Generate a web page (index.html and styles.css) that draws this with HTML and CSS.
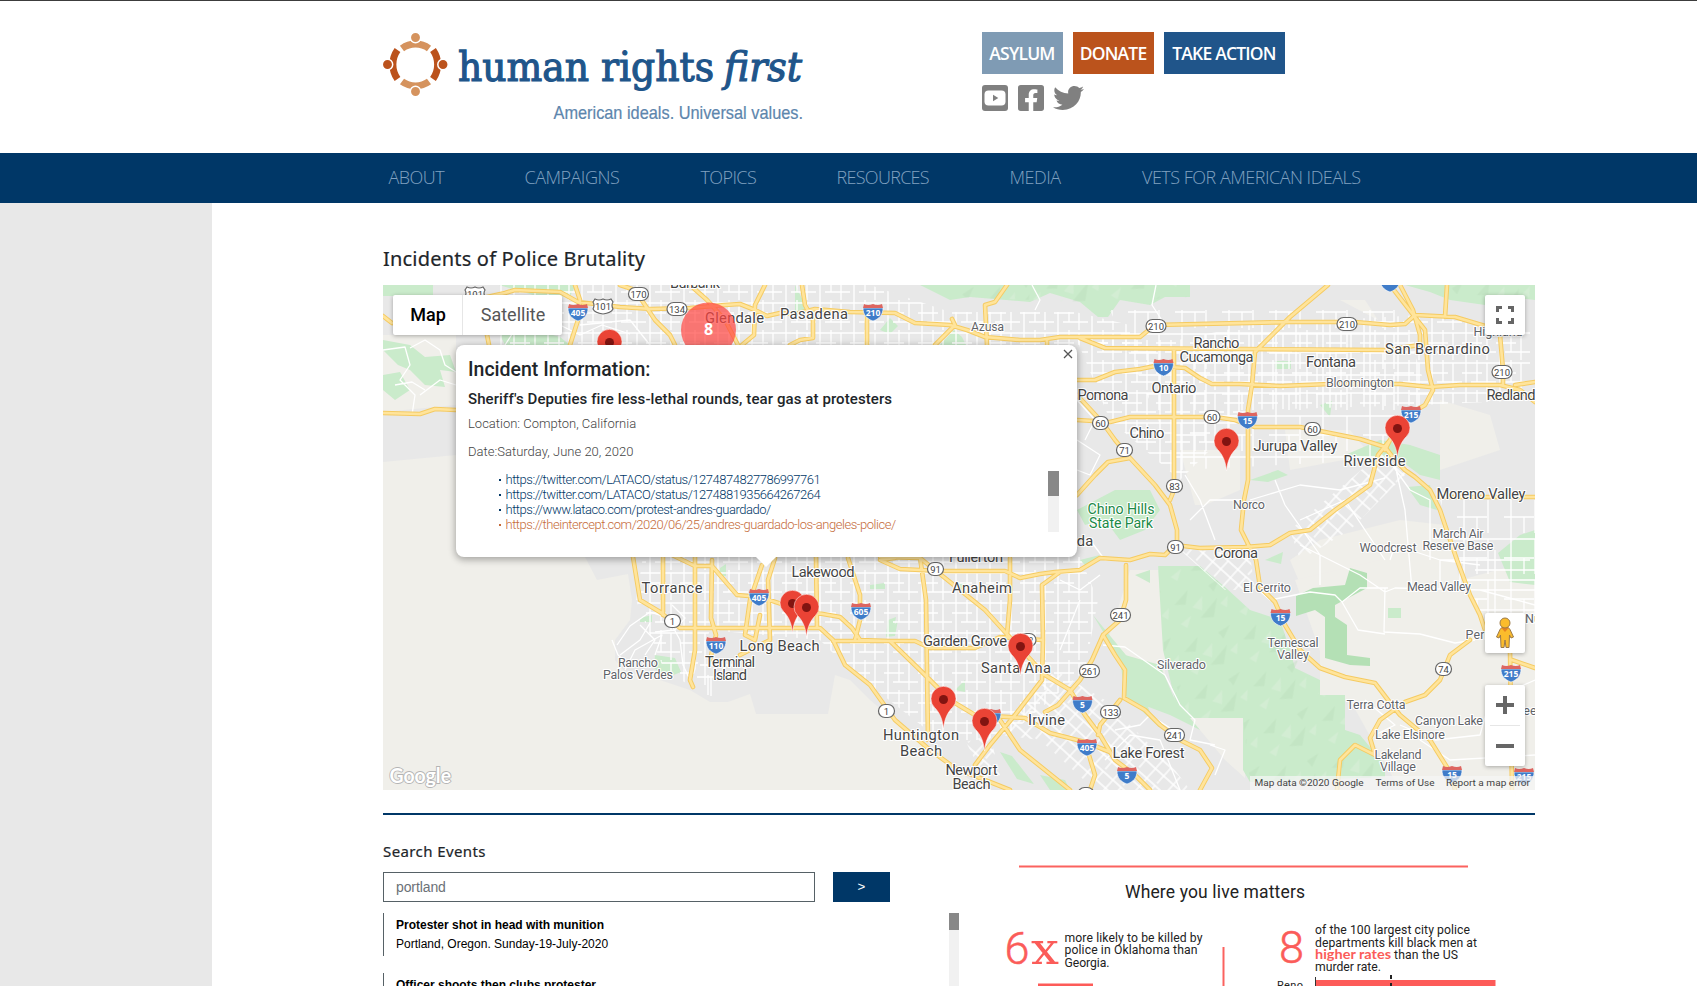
FILE: index.html
```html
<!DOCTYPE html>
<html lang="en">
<head>
<meta charset="utf-8">
<title>Human Rights First</title>
<link rel="stylesheet" href="styles.css">
</head>
<body>
<header class="header">
  <svg class="logo" width="430" height="100" viewBox="380 30 430 100" role="img" aria-label="human rights first">
    <g fill="none" stroke-width="7">
      <g stroke="#d5935e"><path d="M402 48.500A23 23 0 0 1 429 48.500"/><path d="M402 81.500A23 23 0 0 0 429 81.500"/></g>
      <g stroke="#bb521c"><path d="M397.500 50A25 25 0 0 0 397.500 79"/><path d="M433 50A25 25 0 0 1 433 79"/></g>
    </g>
    <g stroke="#fff" stroke-width="1.500">
      <circle cx="415.500" cy="37.500" r="5.200" fill="#d5935e"/><circle cx="415.500" cy="91.500" r="5.200" fill="#d5935e"/>
      <circle cx="387.500" cy="64.500" r="5.200" fill="#bb521c"/><circle cx="443" cy="64.500" r="5.200" fill="#bb521c"/>
    </g>
    <g class="wordmark">
      <text x="458" y="80.500" textLength="256" lengthAdjust="spacingAndGlyphs">human rights</text>
      <text x="724" y="80.500" textLength="78" lengthAdjust="spacingAndGlyphs" font-style="italic">first</text>
    </g>
    <text class="tagline" x="553.500" y="119" textLength="249.500" lengthAdjust="spacingAndGlyphs">American ideals. Universal values.</text>
  </svg>
  <div class="actions">
    <div class="buttons"><a class="btn asylum">ASYLUM</a><a class="btn donate">DONATE</a><a class="btn take">TAKE ACTION</a></div>
    <div class="social">
      <svg width="26" height="26" viewBox="0 0 26 26"><rect width="26" height="26" rx="3" fill="#808080"/><rect x="2.500" y="5.500" width="21" height="15" rx="4" fill="#fff"/><path d="M11 9.800v6.400l5.300-3.200z" fill="#808080"/></svg>
      <svg width="26" height="26" viewBox="0 0 448 448"><path fill="#808080" d="M400 0H48A48 48 0 0 0 0 48v352a48 48 0 0 0 48 48h137V296h-63v-72h63v-55c0-62 37-96 94-96 27 0 55 5 55 5v61h-31c-31 0-40 19-40 38v47h69l-11 72h-58v152h137a48 48 0 0 0 48-48V48a48 48 0 0 0-48-48z"/></svg>
      <svg width="31" height="26" viewBox="0 30 512 452" preserveAspectRatio="none"><path fill="#808080" d="M459.400 151.700c.3 4.500.3 9.100.3 13.600 0 138.700-105.600 298.600-298.600 298.600-59.500 0-114.700-17.200-161.100-47.100 8.400 1 16.600 1.300 25.300 1.300 49.100 0 94.200-16.600 130.300-44.800-46.100-1-84.800-31.200-98.100-72.800 6.500 1 13 1.600 19.800 1.600 9.400 0 18.800-1.300 27.600-3.600-48.100-9.700-84.100-52-84.100-103v-1.300c14 7.800 30.200 12.700 47.400 13.300-28.300-18.800-46.800-51-46.800-87.400 0-19.500 5.200-37.400 14.300-53 51.700 63.700 129.300 105.300 216.400 109.800-1.600-7.800-2.600-15.900-2.600-24 0-57.800 46.800-104.900 104.900-104.900 30.200 0 57.500 12.700 76.700 33.100 23.700-4.500 46.500-13.300 66.600-25.300-7.800 24.400-24.400 44.800-46.100 57.800 21.100-2.300 41.600-8.100 60.400-16.200-14.300 20.800-32.200 39.300-52.600 54.300z"/></svg>
    </div>
  </div>
</header>
<nav class="nav">
  <a class="n1">ABOUT</a><a class="n2">CAMPAIGNS</a><a class="n3">TOPICS</a><a class="n4">RESOURCES</a><a class="n5">MEDIA</a><a class="n6">VETS FOR AMERICAN IDEALS</a>
</nav>
<div class="page">
<aside class="gutter"></aside>
<main class="content">
  <h1 class="title">Incidents of Police Brutality</h1>
  <section class="map">
    <svg class="tiles" width="1152" height="505" viewBox="383 285 1152 505">
      <defs>
        <pattern id="grid" width="34" height="30" patternUnits="userSpaceOnUse"><path d="M0 3H34M0 13H20M9 22H34M4 0V30M15 0V22M25 3V30" stroke="#fff" stroke-width="1.300" fill="none"/></pattern>
        <pattern id="wide" width="47" height="41" patternUnits="userSpaceOnUse"><path d="M0 6H47M0 25H30M7 0V41M31 6V41M20 25V41" stroke="#fff" stroke-width="1.300" fill="none"/></pattern>
        <pattern id="diag" width="24" height="24" patternUnits="userSpaceOnUse" patternTransform="rotate(42)"><path d="M0 3H24M0 14H24M5 0V24M16 3V24" stroke="#fff" stroke-width="1.300" fill="none"/></pattern>
        <pattern id="relief" width="60" height="48" patternUnits="userSpaceOnUse" patternTransform="rotate(-12)"><path d="M3 20l16-12-5 14zM26 38l20-16-7 18zM40 8l13-5-9 12z" fill="#b6d8b8" opacity=".35"/><path d="M20 26l12-9-3 14zM48 28l9-6-3 11zM5 40l12-6-6 11z" fill="#d9eed8" opacity=".6"/></pattern>
        <g id="pin"><path d="M0 29.500C-1 18-5 12-9 8A12.500 12.500 0 1 1 9 8C5 12 1 18 0 29.500z" fill="#ea4335" stroke="#fff" stroke-width=".5"/><circle r="4.500" fill="#811411"/></g>
        <g id="us"><path d="M-10-4H10C10 3 6 7 0 9-6 7-10 3-10-4z" fill="#3f7cc9" stroke="#fff" stroke-width=".6"/><path d="M-9-8Q-5-6 0-8Q5-6 9-8L10-4H-10z" fill="#dd6560"/></g>
        <g id="sr"><rect x="-8" y="-6.500" width="16" height="13" rx="6.500" fill="#fff" stroke="#666" stroke-width="1.200"/></g>
        <g id="sr3"><rect x="-10" y="-6.500" width="20" height="13" rx="6.500" fill="#fff" stroke="#666" stroke-width="1.200"/></g>
        <g id="old"><path d="M-8-7Q-4-5 0-7 4-5 8-7L10-4Q8-1 10 3 8 7 0 8-8 7-10 3-8-1-10-4z" fill="#fff" stroke="#666" stroke-width="1.200"/></g>
      </defs>
      <rect x="383" y="285" width="1152" height="505" fill="#e8e8e8"/>
      <g fill="#f0efea">
        <path d="M383 335L456 335V405L383 412zM1340 300H1365L1378 320L1340 300zM1180 450H1240V490L1205 505H1195zM1285 430L1350 430 1370 455 1290 470zM1400 520L1445 525 1460 580 1535 560V790H1400L1350 700 1290 560 1320 540zM1130 570H1165V690H1130L1108 640zM1440 400L1490 415 1500 450 1440 470zM1190 718L1245 718V778L1225 760z"/>
        <path d="M1295 580L1380 560 1460 600 1480 690 1400 700 1330 680zM1320 600H1350V700H1320z"/>
        <path d="M383 462L456 455 585 557 597 580 628 574 632 600 630 620 615 640V660L625 672 660 680 690 690 710 702H728L750 694 756 714H828L835 675 850 680 870 700 900 725 940 757 970 780 990 790H383z"/>
      </g>
      <g fill="#caebcb">
        <path d="M383 285H433V296H383zM383 340L410 345 425 357 450 355 456 372 440 370 445 387 425 385 410 370 398 365 383 350zM383 375L400 372 410 390 395 400 383 390zM499 285H576L570 296 540 297zM500 335L535 330 560 337 570 345H505zM795 285L808 310 795 312zM880 330l10-12 8 8-8 8zM940 345l14-15 8 7 4 8z"/>
        <path d="M920 285H1190V297L1165 297 1150 305 1120 300 1108 317 1098 317 1080 302 1050 293 1030 302 970 297 950 300zM1405 285H1535V300L1510 297 1485 305 1450 300 1430 292zM1077 510L1115 490H1150L1160 510 1145 530 1120 540 1105 520 1085 525zM1345 455L1380 440 1410 445 1440 455V480L1420 475 1400 460zM1407 487L1430 485 1437 510 1420 505zM1498 553L1520 535 1535 530V585L1510 582zM1320 405l12-4-2 16zM1275 361h16v8h-16zM1250 480l28-10 10 5-20 7z"/>
        <path d="M1158 566H1200L1225 587 1250 610 1280 620 1290 650 1295 668 1320 680V695H1345V730L1360 735 1385 765V777L1250 782 1243 770V718H1190L1200 730 1170 715 1130 700 1125 655 1160 665 1175 700 1163 650z"/>
        <path d="M1093 615L1120 660 1125 695 1160 728 1150 712 1130 660zM640 618l12-3v7h-12zM655 655l20 3 6 14-15 6-12-10zM1388 608H1401V618H1388zM955 690l10-10v12zM1000 752l12 4 22 28-17-5zM1040 775l25 5 5 10h-20zM888 620l8-3-3 17-7 2zM720 568l6-4v12h-6zM952 585l16-3-8 8zM898 620l-3 16-9 1zM870 585l15-2v6h-15zM1100 555l-20 5 8 8zM1135 575l15-5v13zM1265 560l18-8-2 12z"/>
      </g>
      <path d="M1313 588L1345 585 1350 568 1367 573V588L1335 605V617L1347 625V655L1370 658V666L1350 665 1325 658V617L1315 610 1296 616V596z" fill="#b4e0b5"/>
      <path d="M1158 566H1200L1225 587 1250 610 1280 620 1290 650 1320 695H1345V730L1385 777 1250 782 1243 718H1190L1165 660zM940 285H1190V297L1080 302 960 297zM1410 285H1535V300L1430 292z" fill="url(#relief)"/>
      <path d="M500 285H870L950 312H1075L1130 325V345H500z" fill="url(#grid)"/>
      <path d="M643 557H1080L1098 600 1085 670 1015 730 985 740 940 740 870 685 845 665 820 640 710 630 690 685 665 672 636 600z" fill="url(#grid)"/>
      <path d="M1077 340H1178L1250 325 1420 315 1530 330V400L1420 405 1250 410 1180 480 1110 420z" fill="url(#grid)"/>
      <path d="M1110 310H1400L1430 400 1380 460 1180 470zM1440 500H1535V620H1480z" fill="url(#wide)"/>
      <path d="M1290 530L1385 450 1410 470 1350 530 1300 560zM1055 670L1105 700 1175 770 1190 790H1095L1040 740 1000 735zM1178 548L1250 555 1255 590 1225 590zM966 742L990 735 1000 775 985 780z" fill="url(#diag)"/>
      <g class="street">
        <path d="M383 350L405 347 410 365 400 380 415 395 412 415M410 348L425 340 440 350 445 365 456 372M395 385L412 382 425 390M420 395L440 380 456 385M505 345L520 322 550 320 580 335 602 325 630 334M580 325L630 320 650 345M1156 285L1152 305 1165 325M1032 285L1040 300 1035 310"/>
        <path d="M617 645L630 626 650 612 668 618 680 640 683 665 690 680M620 655L640 640 650 623M625 670L635 650 662 635 655 655M612 640L618 655 630 665M640 625L655 640 645 655M672 605L685 618 675 630 655 632M700 665L735 665M697 677H725M705 640V685M708 695V675M711 696V676"/>
        <path d="M1077 440L1100 455 1090 475 1077 470M1077 400L1095 420 1085 440M1185 475L1200 500 1215 540M1190 520L1210 500 1240 500M1250 500L1300 485 1340 490 1385 478M1275 480L1285 505 1320 555 1320 585M1300 520L1345 500 1385 560M1385 455L1410 490 1430 500V560M1395 465L1405 510 1412 590M1300 545L1360 575 1385 592 1395 588 1480 590 1535 605M1255 587L1270 600 1310 592 1335 595 1342 602 1360 588 1388 588M1342 602L1358 630 1385 634M1385 588L1384 632 1420 634 1455 643 1475 640M1390 560L1395 545 1440 560 1480 565M1070 550L1090 540 1105 560 1120 560M1103 645L1125 647 1165 675 1180 705 1195 720 1190 740 1215 745M1115 730L1140 725 1150 715 1170 728M1105 760L1130 735 1160 740 1180 790M1210 745L1225 750 1215 775M1080 600L1070 625 1060 650M1060 580L1080 590 1100 575M1365 700L1395 725 1375 735M1400 725L1435 740 1480 735 1490 700 1535 680M1420 740L1450 760 1535 755M1440 590V560H1530M1460 590V560M1495 550V625M1475 570H1535M1475 590H1535M1475 610H1535"/>
      </g>
      <g>
        <g class="casing">
          <path id="hw" d="M383 316L392 323M487 297L505 293 515 290 560 292 578 302 604 305 620 307 652 309 690 308 725 305 740 304 755 310 767 316 780 313 795 314 815 309 850 312 895 313 915 323 950 325 967 330 985 337 1020 340 1040 340 1060 337 1140 337 1155 325 1290 322 1355 322 1390 325 1405 324 1415 315 1455 317 1485 326 1500 335 1503 370V385M575 285L580 300 578 320 570 345M487 335L489 345M620 285L635 290 645 305 655 320 670 335 675 345M690 285L707 300 725 320 738 345M765 285L755 305 754 335 742 345M802 285L805 305 813 320 813 338 800 340 790 345M867 315V345M935 345L955 325 952 319M1007 285L995 302 985 305 987 345M1047 340V348M1080 338L1105 348 1385 350 1420 345M1077 380H1095L1115 372 1140 369 1155 366 1185 368 1200 378 1212 384H1240L1280 386 1330 384H1400L1430 387 1460 385H1500L1520 390 1535 402M1077 420L1110 422 1130 417 1215 417 1235 420 1255 427H1300L1330 433 1360 439 1385 447 1395 460 1405 470 1415 477 1430 490 1440 510 1445 525 1457 560 1470 595 1480 615 1485 630M1328 285L1290 317 1255 352 1252 385 1248 410V480L1244 500 1241 530 1256 560 1260 587 1275 602 1285 625 1300 650 1320 668 1345 677 1375 683 1388 700 1400 715 1430 740 1450 772 1455 790M1174 350V490L1170 500M1077 395L1102 422 1115 440 1130 458 1155 485 1170 505 1177 530V548M1077 495L1095 475 1108 462 1130 458M895 558L880 560 900 569 940 571H1005L1020 578 1040 574 1055 572 1080 570 1100 558 1130 560 1150 554 1165 555 1175 545 1200 548 1245 547 1270 545 1290 533 1310 530 1335 510 1370 485 1378 455 1390 440M1390 285L1425 330 1428 370 1433 390 1425 405 1400 420 1385 450M1400 285L1413 310 1420 335V345M1447 285L1445 317M1515 385L1535 382M1440 497H1535M1126 565V600L1120 620 1103 635 1115 655 1125 670 1124 698 1145 710 1160 725 1180 740 1200 750 1212 768 1200 790M1103 635L1092 660 1080 680 1058 705 1045 712M1120 700L1100 725 1098 735M880 557L920 558 960 590 985 610 1005 632 1045 675 1070 690 1085 715 1100 735 1115 760 1135 775 1150 790M672 555L695 566 712 566 737 595 760 597 800 610 840 617 852 628 860 640 890 641 920 670 950 700 975 715 1025 718 1050 733 1085 742 1110 752M833 641H915L930 648H975L1000 637 1042 640M633 557L640 600 660 612 680 628H820L833 640 845 665 870 685 895 720 930 750 955 768 985 780 1010 790M663 557V615M695 557V650L690 680 693 687M712 560L711 618 716 635 710 660M762 565L750 600 745 635 755 640 760 615M775 558L768 580 770 640 740 655M848 558L860 595V620L855 640M816 557L817 627M920 557L926 600 928 740M1010 558V600L1007 635M1060 572L1042 585 1043 640 1042 680 1015 715 990 745 975 765M1000 720L1020 750 1045 770 1070 790M1085 742L1095 775 1090 790M1470 640L1450 655 1440 680 1425 695 1405 702 1380 720 1370 738 1375 755 1355 745 1340 760 1337 790M1510 650L1512 790M1512 660L1535 668M383 413L420 414 435 409 456 410"/>
        </g>
        <use href="#hw" class="fillroad"/>
      </g>
      <g class="small-shield">
        <use href="#us" x="578" y="312"/><text x="578" y="317">405</text>
        <use href="#us" x="873" y="312"/><text x="873" y="317">210</text>
        <use href="#us" x="1390" y="283"/>
        <use href="#us" x="1163.500" y="367"/><text x="1163.500" y="372">10</text>
        <use href="#us" x="1247.500" y="420"/><text x="1247.500" y="425">15</text>
        <use href="#us" x="1411" y="414"/><text x="1411" y="419">215</text>
        <use href="#us" x="759" y="597"/><text x="759" y="602">405</text>
        <use href="#us" x="861" y="611"/><text x="861" y="616">605</text>
        <use href="#us" x="716" y="645"/><text x="716" y="650">110</text>
        <use href="#us" x="1280.500" y="617"/><text x="1280.500" y="622">15</text>
        <use href="#us" x="1082.500" y="704"/><text x="1082.500" y="709">5</text>
        <use href="#us" x="1087" y="747"/><text x="1087" y="752">405</text>
        <use href="#us" x="1127" y="775"/><text x="1127" y="780">5</text>
        <use href="#us" x="1511" y="673"/><text x="1511" y="678">215</text>
        <use href="#us" x="1452" y="774"/><text x="1452" y="779">15</text>
        <use href="#us" x="1524" y="776"/><text x="1524" y="781">215</text>
        <use href="#us" x="991" y="717"/>
      </g>
      <g class="route">
        <use href="#old" x="475" y="294"/><text x="475" y="298">101</text>
        <use href="#sr3" x="638.500" y="294"/><text x="638.500" y="297.500">170</text>
        <use href="#old" x="603" y="306"/><text x="603" y="310">101</text>
        <use href="#sr3" x="677" y="309"/><text x="677" y="312.500">134</text>
        <use href="#sr3" x="1156" y="326"/><text x="1156" y="329.500">210</text>
        <use href="#sr3" x="1347" y="324"/><text x="1347" y="327.500">210</text>
        <use href="#sr3" x="1502" y="372"/><text x="1502" y="375.500">210</text>
        <use href="#sr" x="1100.500" y="423"/><text x="1100.500" y="426.500">60</text>
        <use href="#sr" x="1212" y="417"/><text x="1212" y="420.500">60</text>
        <use href="#sr" x="1312.500" y="429"/><text x="1312.500" y="432.500">60</text>
        <use href="#sr" x="1124.500" y="450"/><text x="1124.500" y="453.500">71</text>
        <use href="#sr" x="1174.500" y="486"/><text x="1174.500" y="489.500">83</text>
        <use href="#sr" x="1175.500" y="547"/><text x="1175.500" y="550.500">91</text>
        <use href="#sr" x="935.500" y="569"/><text x="935.500" y="572.500">91</text>
        <use href="#sr3" x="1120.500" y="615"/><text x="1120.500" y="618.500">241</text>
        <use href="#sr3" x="1174.500" y="735"/><text x="1174.500" y="738.500">241</text>
        <use href="#sr3" x="1089.500" y="671"/><text x="1089.500" y="674.500">261</text>
        <use href="#sr3" x="1110.500" y="712"/><text x="1110.500" y="715.500">133</text>
        <use href="#sr" x="1443.500" y="669"/><text x="1443.500" y="672.500">74</text>
        <use href="#sr" x="672.500" y="621"/><text x="672.500" y="624.500">1</text>
        <use href="#sr" x="886.500" y="711"/><text x="886.500" y="714.500">1</text>
        <use href="#sr" x="1028" y="640"/><text x="1028" y="643.500">22</text>
        <use href="#sr" x="1086" y="794"/>
      </g>
      <g class="label city">
        <text x="695" y="288" textLength="50">Burbank</text><text x="734.500" y="323" textLength="59">Glendale</text><text x="814" y="318.500" textLength="68">Pasadena</text>
        <text x="1216.500" y="348" textLength="46">Rancho</text><text x="1216.500" y="362" textLength="74">Cucamonga</text><text x="1331" y="367" textLength="50">Fontana</text>
        <text x="1437.500" y="353.500" textLength="105">San Bernardino</text><text x="1174" y="393" textLength="45">Ontario</text><text x="1103" y="400" textLength="51">Pomona</text><text x="1511" y="400" textLength="49">Redland</text>
        <text x="1147" y="438" textLength="35">Chino</text><text x="1295.500" y="451" textLength="84">Jurupa Valley</text><text x="1374.500" y="465.500" textLength="62">Riverside</text><text x="1481" y="499" textLength="89">Moreno Valley</text>
        <text x="1236" y="558" textLength="44">Corona</text><text x="976" y="562" textLength="54">Fullerton</text><text x="1085" y="546">da</text><text x="823" y="577" textLength="63">Lakewood</text>
        <text x="672" y="592.500" textLength="61">Torrance</text><text x="982" y="592.500" textLength="60">Anaheim</text><text x="730" y="666.500" textLength="50">Terminal</text><text x="730" y="679.500" textLength="34">Island</text>
        <text x="779.500" y="650.500" textLength="80">Long Beach</text><text x="965" y="646" textLength="84">Garden Grove</text><text x="1016" y="672.500" textLength="70">Santa Ana</text><text x="921" y="739.500" textLength="76">Huntington</text><text x="921" y="755.500" textLength="42">Beach</text>
        <text x="971.500" y="775" textLength="52">Newport</text><text x="971.500" y="789" textLength="38">Beach</text><text x="1046.500" y="725" textLength="37">Irvine</text><text x="1148.500" y="758" textLength="72">Lake Forest</text>
      </g>
      <g class="label town">
        <text x="987.500" y="330.500" textLength="33">Azusa</text><text x="1360" y="386.500" textLength="68">Bloomington</text><text x="1249" y="508.500" textLength="32">Norco</text><text x="1458" y="537.500" textLength="51">March Air</text><text x="1458" y="549.500" textLength="71">Reserve Base</text>
        <text x="1388" y="551.500" textLength="57">Woodcrest</text><text x="1267" y="591.500" textLength="48">El Cerrito</text><text x="1439" y="590.500" textLength="64">Mead Valley</text><text x="638" y="666.500" textLength="40">Rancho</text><text x="638" y="678.500" textLength="70">Palos Verdes</text>
        <text x="1181.500" y="668.500" textLength="49">Silverado</text><text x="1293" y="646.500" textLength="51">Temescal</text><text x="1293" y="658.500" textLength="32">Valley</text><text x="1376" y="708.500" textLength="59">Terra Cotta</text><text x="1449" y="724.500" textLength="68">Canyon Lake</text>
        <text x="1410" y="738.500" textLength="70">Lake Elsinore</text><text x="1398" y="758.500" textLength="47">Lakeland</text><text x="1398" y="770.500" textLength="36">Village</text><text x="1482" y="638.500" textLength="33">Perris</text><text x="1533" y="622.500">Nu</text><text x="1530" y="714.500">ee</text><text x="1498" y="335.500" textLength="49">Highland</text>
      </g>
      <g class="label park"><text x="1121" y="513.500" textLength="67">Chino Hills</text><text x="1121" y="527.500" textLength="64">State Park</text></g>
      <circle cx="708.500" cy="330" r="27.500" fill="#ff4440" opacity=".7"/><text class="cluster" x="708.500" y="335">8</text>
      <use href="#pin" x="609.500" y="342.500"/><use href="#pin" x="1226.500" y="441.500"/><use href="#pin" x="1397.500" y="428.500"/><use href="#pin" x="792.500" y="603.500"/><use href="#pin" x="806.500" y="607.500"/><use href="#pin" x="1020.500" y="646.500"/><use href="#pin" x="943.500" y="699.500"/><use href="#pin" x="984.500" y="721.500"/>
      <rect x="1250" y="776" width="285" height="14" fill="#f5f5f5" opacity=".72"/>
      <g class="credits"><text x="1254.500" y="786" textLength="109" lengthAdjust="spacingAndGlyphs">Map data ©2020 Google</text><text x="1375.500" y="786" textLength="59" lengthAdjust="spacingAndGlyphs">Terms of Use</text><text x="1446" y="786" textLength="84" lengthAdjust="spacingAndGlyphs">Report a map error</text></g>
      <text class="google" x="389.500" y="782.500" textLength="61.500" lengthAdjust="spacingAndGlyphs">Google</text>
    </svg>
    <div class="control type"><span class="map-type active">Map</span><span class="map-type sat">Satellite</span></div>
    <div class="control full"><svg width="18" height="18" viewBox="0 0 18 18"><path d="M1.500 6V1.500H6M12 1.500h4.500V6M16.500 12v4.500H12M6 16.500H1.500V12" fill="none" stroke="#666" stroke-width="3"/></svg></div>
    <div class="control pegman"><svg width="20" height="32" viewBox="0 0 20 32"><path d="M5 12.500Q6 10 10 10Q14 10 15 12.500L18.500 20 16 21 14.500 18 14 30.500H11L10 23 9 30.500H6L5.500 18 4 21 1.500 20z" fill="#fbbc2c" stroke="#9b7948"/><path d="M6 10.500H14L10 15z" fill="#e78321"/><circle cx="10" cy="6" r="5" fill="#fbbc2c" stroke="#9b7948"/></svg></div>
    <div class="control zoom"><svg width="40" height="81" viewBox="0 0 40 81"><path d="M20 11v18M11 20h18M11 61h18" stroke="#666" stroke-width="4"/><path d="M5 40.500h30" stroke="#e6e6e6"/></svg></div>
    <article class="popup">
      <svg class="close" width="10" height="10" viewBox="0 0 10 10"><path d="M1 1l8 8M9 1L1 9" stroke="#555" stroke-width="1.300"/></svg>
      <h2>Incident Information:</h2>
      <h3>Sheriff's Deputies fire less-lethal rounds, tear gas at protesters</h3>
      <p class="where">Location: Compton, California</p>
      <p class="when">Date:Saturday, June 20, 2020</p>
      <div class="links">
        <ul><li>https://twitter.com/LATACO/status/1274874827786997761</li><li>https://twitter.com/LATACO/status/1274881935664267264</li><li>https://www.lataco.com/protest-andres-guardado/</li><li class="hot">https://theintercept.com/2020/06/25/andres-guardado-los-angeles-police/</li></ul>
        <div class="track"><div class="thumb"></div></div>
      </div>
    </article>
  </section>
  <div class="lower">
    <section class="search">
      <h2>Search Events</h2>
      <div class="row"><div class="input">portland</div><div class="go">&gt;</div></div>
      <div class="results">
        <div class="list">
          <div class="event"><b>Protester shot in head with munition</b><span>Portland, Oregon. Sunday-19-July-2020</span></div>
          <div class="event"><b>Officer shoots then clubs protester</b></div>
        </div>
        <div class="scroll"><div class="scroll-thumb"></div></div>
      </div>
    </section>
    <svg class="facts" width="576" height="146" viewBox="959 840 576 146">
      <path d="M1019 866.500H1468" stroke="#fb625f" stroke-width="2"/>
      <text x="1125" y="897.500" font-size="17.500" textLength="180">Where you live matters</text>
      <g fill="#fb5c59"><text class="big" x="1004.500" y="964" textLength="25" lengthAdjust="spacingAndGlyphs">6</text><text class="slab" x="1031" y="964" textLength="28" lengthAdjust="spacingAndGlyphs">x</text><text class="big" x="1279" y="963" textLength="25" lengthAdjust="spacingAndGlyphs">8</text></g>
      <g font-size="12.200"><text x="1064.500" y="941.500" textLength="138">more likely to be killed by</text><text x="1064.500" y="954" textLength="133">police in Oklahoma than</text><text x="1064.500" y="966.500" textLength="45">Georgia.</text>
      <text x="1315" y="934" textLength="155">of the 100 largest city police</text><text x="1315" y="946.500" textLength="162">departments kill black men at</text><text class="rates" x="1315" y="958.500" textLength="76" lengthAdjust="spacingAndGlyphs">higher rates</text><text x="1394" y="958.500" textLength="64">than the US</text><text x="1315" y="970.500" textLength="66">murder rate.</text><text x="1277" y="988.500" font-size="11" textLength="26">Reno</text></g>
      <path d="M1223.500 947V986" stroke="#fb625f" stroke-width="2"/><path d="M1038 983.500H1093V986H1038zM1315 980H1495.500V986H1315z" fill="#fd5b58"/><path d="M1315.500 977V986" stroke="#333"/><path d="M1391 975V979M1391 983V986" stroke="#222" stroke-width="2"/>
    </svg>
  </div>
</main>
</div>
</body>
</html>
```
FILE: styles.css
```css
* { box-sizing: border-box; }
html, body { height: 986px; overflow: hidden; }
body { margin: 0; background: #fff; font-family: "Open Sans", "Noto Sans", sans-serif; color: #212529; }
h1, h2, h3, p, ul { margin: 0; padding: 0; }
text { white-space: pre; }

.header { height: 153px; border-top: 1px solid #3c3c3c; padding: 29px 0 0 380px; display: flex; gap: 172px; }
.logo { flex: none; }
.wordmark { fill: #20558a; font: 41px "DejaVu Serif Condensed", "DejaVu Serif", serif; stroke: #20558a; stroke-width: 1.100; }
.tagline { fill: #5d86ad; font: 18.500px "Liberation Sans Narrow", "Liberation Sans", sans-serif; stroke: #5d86ad; stroke-width: .2; }
.actions { padding-top: 2px; }
.buttons { display: flex; gap: 10px; }
.btn { height: 42px; width: 81px; display: flex; align-items: center; justify-content: center; color: #fff; font-weight: 600; font-size: 17.500px; letter-spacing: -.8px; white-space: nowrap; padding-right: 1px; }
.asylum { background: #7f9bb4; }
.donate { background: #bb531c; }
.take { background: #20558a; width: 121px; }
.social { display: flex; gap: 10px; margin-top: 11px; }
.social svg:last-child { margin-left: -1px; }

.nav { height: 50px; background: #003767; padding-left: 388.500px; display: flex; align-items: center; color: #80a2c1; font-size: 18px; font-weight: 300; letter-spacing: -.5px; white-space: nowrap; }
.nav a { flex: none; padding-bottom: 3px; }
.n1 { width: 136px; } .n2 { width: 176px; } .n3 { width: 136px; letter-spacing: -.6px; } .n4 { width: 173px; letter-spacing: -.7px; } .n5 { width: 132.500px; }

.page { display: flex; height: 783px; }
.gutter { width: 212px; background: #e8e8e8; flex: none; }
.content { padding-left: 171px; width: 1323px; flex: none; }
.title { height: 82px; padding-top: 40px; font: 400 20px/32px "Noto Sans", sans-serif; letter-spacing: .2px; white-space: nowrap; -webkit-text-stroke: .2px #212529; }

.map { position: relative; width: 1152px; height: 505px; overflow: hidden; font-family: Roboto, sans-serif; }
.tiles { display: block; font-family: Roboto, sans-serif; }
.street { fill: none; stroke: #fff; stroke-width: 1.300; stroke-linejoin: round; }
#hw { fill: none; stroke-linejoin: round; stroke-linecap: round; }
.casing { stroke: #f5cb62; stroke-width: 4.600; }
.fillroad { stroke: #ffe49b; stroke-width: 2.700; }
.label { text-anchor: middle; paint-order: stroke; stroke: #fff; stroke-width: 2.200px; stroke-linejoin: round; }
.city { font-size: 14.700px; fill: #444; }
.town { font-size: 12.500px; fill: #5f6368; }
.park { font-size: 14.200px; fill: #1c8a47; }
.small-shield text { font: 700 8.500px "Open Sans", sans-serif; fill: #fff; text-anchor: middle; transform: translateY(-1.500px); }
.route text { font-size: 9.500px; fill: #444; text-anchor: middle; }
.cluster { font: 700 16px "Open Sans", sans-serif; fill: #fff; text-anchor: middle; }
.credits { font-size: 9.700px; fill: #444; }
.google { font: 700 20px Lato, sans-serif; fill: #fff; stroke: #b4b4b4; stroke-width: 1.800; paint-order: stroke; }

.control { position: absolute; background: #fff; border-radius: 2px; box-shadow: 0 1px 4px rgba(0,0,0,.3); width: 40px; height: 40px; display: flex; align-items: center; justify-content: center; right: 10px; }
.type { left: 10px; top: 10px; width: 169px; font-size: 18px; color: #565656; }
.map-type { display: flex; align-items: center; justify-content: center; width: 70px; height: 40px; padding-bottom: 2px; padding-left: 1px; }
.active { color: #000; font-weight: 500; border-right: 1px solid #e6e6e6; }
.sat { width: 99px; }
.full { top: 10px; }
.pegman { top: 328px; }
.zoom { top: 400px; height: 81px; }

.popup { position: absolute; left: 73px; top: 60px; width: 621px; height: 212px; background: #fff; border-radius: 8px; padding: 13px 12px 12px; box-shadow: 0 2px 7px 1px rgba(0,0,0,.3); }
.popup::after { content: ""; position: absolute; left: 299px; top: 211px; border: 11px solid transparent; border-top-color: #fff; border-bottom: 0; }
.close { position: absolute; right: 4px; top: 4px; }
.popup h2 { font: 500 19.500px/24px Roboto, sans-serif; white-space: nowrap; }
.popup h3 { margin-top: 7px; font: 500 15px/20px Roboto, sans-serif; letter-spacing: .09px; white-space: nowrap; }
.popup p { font-size: 13px; font-weight: 300; line-height: 16px; color: #444; }
.popup .where { margin-top: 7px; }
.popup .when { margin-top: 12px; letter-spacing: .02px; }
.links { margin-top: 11px; height: 62px; display: flex; justify-content: space-between; padding-right: 6px; }
.links ul { list-style: none; padding: 1px 0 0 31px; font-size: 13px; font-weight: 300; line-height: 15px; letter-spacing: -.48px; color: #003767; white-space: nowrap; }
.links li::before { content: ""; display: inline-block; width: 2px; height: 2px; background: currentColor; margin-right: 4.500px; vertical-align: 3px; }
.links .hot { color: #c56b3a; }
.track { width: 11px; height: 61px; background: #f1f1f1; }
.thumb { height: 25px; background: #888; }

.lower { margin-top: 23px; border-top: 2px solid #003767; width: 1152px; height: 173px; display: flex; }
.search { width: 576px; }
.search h2 { height: 57px; padding-top: 24px; font: 400 15px/24px "Noto Sans", sans-serif; letter-spacing: .4px; -webkit-text-stroke: .2px #212529; }
.row { display: flex; gap: 18px; height: 30px; font-family: "Liberation Sans", sans-serif; }
.input { width: 432px; border: 1px solid #566166; padding-left: 12px; line-height: 28px; font-size: 14px; letter-spacing: -.1px; color: #6b7177; }
.go { width: 57px; background: #003767; color: #fff; text-align: center; line-height: 30px; font-size: 13.300px; }
.results { margin-top: 11px; height: 73px; display: flex; overflow: hidden; font: 12px "Liberation Sans", sans-serif; color: #000; justify-content: space-between; }
.event { height: 43px; border-left: 1px solid #566166; margin-bottom: 17px; padding: 3px 0 0 12px; display: flex; flex-direction: column; gap: 1px; line-height: 18px; white-space: nowrap; }
.scroll { width: 10px; background: #f1f1f1; }
.scroll-thumb { height: 17px; background: #888; }
.facts { margin-top: 25px; font-family: Roboto, sans-serif; fill: #222; flex: none; }
.big { font-size: 45px; font-weight: 300; stroke: #fb5c59; stroke-width: .5; }
.slab { font: 50px "DejaVu Serif Condensed", "DejaVu Serif", serif; font-size: 45px; }
.rates { fill: #fb5c59; font: 700 13px Lato, sans-serif; }
```
